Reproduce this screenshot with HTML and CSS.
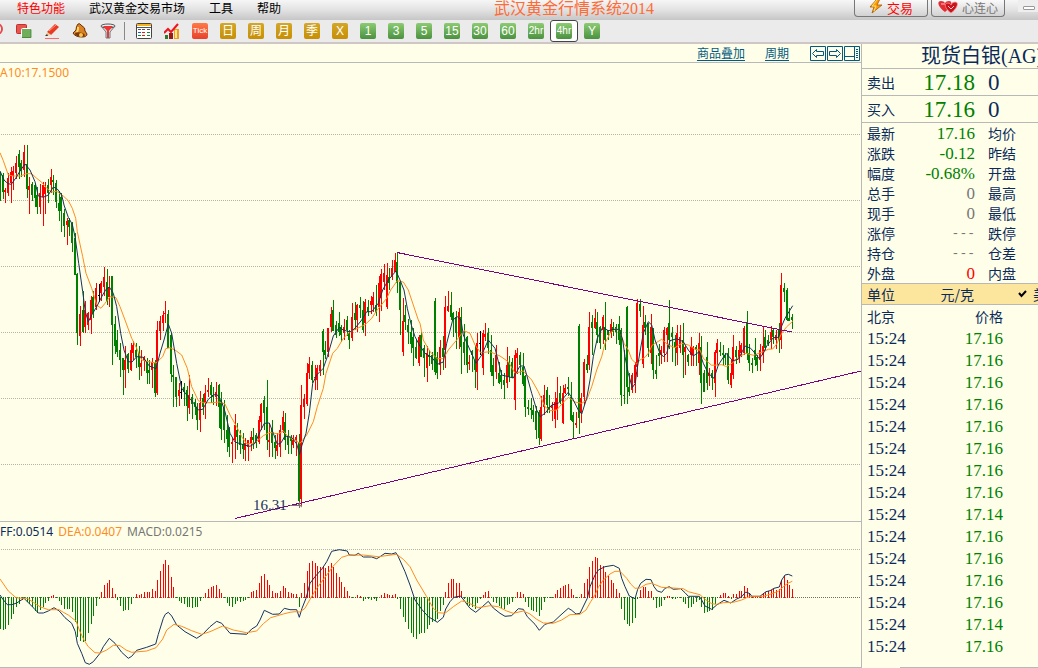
FILE: index.html
```html
<!DOCTYPE html>
<html lang="zh-CN">
<head>
<meta charset="utf-8">
<title>武汉黄金行情系统2014</title>
<link rel="stylesheet" href="styles.css">
</head>
<body>
<header class="menubar">
  <nav class="menus">
    <button class="menu hot">特色功能</button>
    <button class="menu">武汉黄金交易市场</button>
    <button class="menu">工具</button>
    <button class="menu">帮助</button>
  </nav>
  <h1 class="apptitle">武汉黄金行情系统2014</h1>
  <div class="actions">
    <button class="action trade"><svg width="14" height="16" viewBox="0 0 14 16"><path d="M8 0L1 8h4L3 14 13 6H8l3-6z" fill="#f90" stroke="#a35a10" stroke-width=".8"/><path d="M8 1L3 7h4l-2 5" fill="none" stroke="#ffe36b"/></svg>交易</button>
    <button class="action"><svg width="20" height="14" viewBox="0 0 20 14"><path d="M7 12C-1 6-1 1 3 1q3 0 4 2 1-2 4-2c4 0 3 5-4 11z" fill="#e32d35"/><path d="M13 13C6 8 6 3 10 3q2 0 3 2 1-3 4-3c4 0 3 6-4 11z" fill="#c8141e" stroke="#ff8a8a" stroke-width=".8"/><path d="M3 4h4m3 2l3 3 3-3" stroke="#ffc4c4" fill="none"/></svg>心连心</button>
    <button class="minimize" aria-label="最小化"><span class="minmark"></span></button>
  </div>
</header>

<div class="toolbar" role="toolbar">
  <button class="tool first" aria-label="放大"><svg width="16" height="16" viewBox="0 0 16 16"><circle cx="9" cy="6" r="5" fill="#fff" stroke="#e8474a" stroke-width="2"/><path d="M6 10l-4 5" stroke="#c33" stroke-width="2"/></svg></button>
  <button class="tool" aria-label="窗口"><svg width="16" height="16" viewBox="0 0 16 16"><rect x=".5" y="1.500" width="10" height="9" rx="1" fill="#e8554f" stroke="#c22f2f"/><rect x="5.500" y="5.500" width="10" height="9" rx="1" fill="#6fae5c" stroke="#fff"/><path d="M6 14.500h9v-8" fill="none" stroke="#4c8a40"/></svg></button>
  <button class="tool" aria-label="画线"><svg width="16" height="16" viewBox="0 0 16 16"><path d="M3 9L11 1l4 3-8 8z" fill="#ea3a20"/><path d="M5 8l7-6" stroke="#ff9a80"/><path d="M3 9l4 3-5 1z" fill="#f2c58c"/><path d="M1 13l2-2 1 2z" fill="#333"/><path d="M1 15.500h14" stroke="#f66" /></svg></button>
  <button class="tool" aria-label="预警"><svg width="16" height="16" viewBox="0 0 16 16"><path d="M6 1q2-1 3 1 5 3 4 6l2 3q0 3-5 3Q3 14 1 10l3-3Q4 3 6 1z" fill="#d98225" stroke="#6e3009"/><path d="M6 4q0 5-2 6" stroke="#ffd66a" stroke-width="2" fill="none"/><ellipse cx="8" cy="11.500" rx="5" ry="2" transform="rotate(12 8 11)" fill="#7a3a0c"/><circle cx="9" cy="12" r="2" fill="#ffc545"/></svg></button>
  <button class="tool" aria-label="筛选"><svg width="16" height="16" viewBox="0 0 16 16"><path d="M1 3l5 6v6h4V9l5-6z" fill="#ddd" stroke="#777"/><ellipse cx="8" cy="3" rx="7" ry="2" fill="#eee" stroke="#555"/><path d="M3 3h10L8 9z" fill="#e33"/><path d="M8 8v7" stroke="#c44" stroke-width="2"/></svg></button>
  <span class="divider"></span>
  <button class="tool" aria-label="报价"><svg width="16" height="16" viewBox="0 0 16 16"><rect x=".5" y=".5" width="15" height="15" rx="1" fill="#fff" stroke="#444"/><path d="M1 2h14" stroke="#f5b21b" stroke-width="2"/><path d="M1 4.500h14" stroke="#555"/><path d="M2 6.500h3m1 0h3m2 0h3" stroke="#555"/><path d="M2 9.500h3" stroke="#1a57c8"/><path d="M6 9.500h3m-3 3h3" stroke="#d21" /><path d="M11 9.500h3m-3 3h3m-12 0h3" stroke="#183"/></svg></button>
  <button class="tool" aria-label="走势"><svg width="16" height="16" viewBox="0 0 16 16"><path d="M1 12h3v4H1z" fill="#2d7a2d"/><path d="M5 10h4v6H5z" fill="#9a1c10"/><path d="M10 6h5v10h-5z" fill="#f0a018"/><path d="M11 7h2v8h-2z" fill="#ffe69a"/><path d="M0 10l4-4 3 3 7-8" fill="none" stroke="#f0141e" stroke-width="2"/></svg></button>
  <button class="tool"><span class="badge tick">Tick</span></button>
  <button class="tool"><span class="badge gold">日</span></button>
  <button class="tool"><span class="badge gold">周</span></button>
  <button class="tool"><span class="badge gold">月</span></button>
  <button class="tool"><span class="badge gold">季</span></button>
  <button class="tool"><span class="badge gold">X</span></button>
  <button class="tool"><span class="badge">1</span></button>
  <button class="tool"><span class="badge">3</span></button>
  <button class="tool"><span class="badge">5</span></button>
  <button class="tool"><span class="badge">15</span></button>
  <button class="tool"><span class="badge">30</span></button>
  <button class="tool"><span class="badge">60</span></button>
  <button class="tool"><span class="badge small">2hr</span></button>
  <button class="tool active" aria-pressed="true"><span class="badge small">4hr</span></button>
  <button class="tool"><span class="badge">Y</span></button>
</div>

<main class="workspace">
  <section class="charts">
    <div class="chartbar">
      <a class="link" href="#overlay">商品叠加</a>
      <a class="link" href="#period">周期</a>
      <div class="panes">
        <button class="pane" aria-label="上一个"><svg width="16" height="15" viewBox="0 0 16 15"><path d="M.5.5h15v14H.5z"/><path d="M2.500 7.500l4-4v2h7v4h-7v2z"/></svg></button>
        <button class="pane" aria-label="下一个"><svg width="16" height="15" viewBox="0 0 16 15"><path d="M.5.5h15v14H.5z"/><path d="M13.500 7.500l-4-4v2h-7v4h7v2z"/></svg></button>
        <button class="pane" aria-label="布局"><svg width="16" height="15" viewBox="0 0 16 15"><path d="M.5.5h15v14H.5zM10.500 1v13M1 10.500h9M12 3.500h2m-2 2h2m-2 2h2m-2 2h2m-2 2h2"/></svg></button>
      </div>
    </div>
    <div class="legend"><span class="slow">A10:17.1500</span></div>
    <svg class="plot" id="price" viewBox="0 83 861 438" role="img" aria-label="K线图"></svg>
    <div class="legend second"><span class="fast">FF:0.0514</span><span class="slow">DEA:0.0407</span><span class="muted">MACD:0.0215</span></div>
    <svg class="plot" id="macd" viewBox="0 542 861 125" role="img" aria-label="MACD"></svg>
  </section>

  <aside class="quote">
    <h2 class="symbol">现货白银(AG)</h2>
    <table class="book">
      <tr><th>卖出</th><td class="down">17.18</td><td class="qty">0</td></tr>
      <tr><th>买入</th><td class="down">17.16</td><td class="qty">0</td></tr>
    </table>
    <table class="stats">
      <tr><th>最新</th><td class="down">17.16</td><th class="right">均价</th></tr>
      <tr><th>涨跌</th><td class="down">-0.12</td><th class="right">昨结</th></tr>
      <tr><th>幅度</th><td class="down">-0.68%</td><th class="right">开盘</th></tr>
      <tr><th>总手</th><td class="muted">0</td><th class="right">最高</th></tr>
      <tr><th>现手</th><td class="muted">0</td><th class="right">最低</th></tr>
      <tr><th>涨停</th><td class="muted none">---</td><th class="right">跌停</th></tr>
      <tr><th>持仓</th><td class="muted none">---</td><th class="right">仓差</th></tr>
      <tr><th>外盘</th><td class="up">0</td><th class="right">内盘</th></tr>
    </table>
    <div class="unit"><span>单位</span><span class="unitname">元/克</span><svg class="check" width="9" height="8" viewBox="0 0 9 8"><path d="M1 3l2.500 3L8 1" fill="none" stroke="#000" stroke-width="2"/></svg><span>美</span></div>
    <table class="ticks">
      <thead><tr><th>北京</th><th class="pricehead">价格</th></tr></thead>
      <tbody>
        <tr><td>15:24</td><td class="down">17.16</td></tr>
        <tr><td>15:24</td><td class="down">17.16</td></tr>
        <tr><td>15:24</td><td class="down">17.16</td></tr>
        <tr><td>15:24</td><td class="down">17.16</td></tr>
        <tr><td>15:24</td><td class="down">17.16</td></tr>
        <tr><td>15:24</td><td class="down">17.16</td></tr>
        <tr><td>15:24</td><td class="down">17.16</td></tr>
        <tr><td>15:24</td><td class="down">17.16</td></tr>
        <tr><td>15:24</td><td class="down">17.14</td></tr>
        <tr><td>15:24</td><td class="down">17.16</td></tr>
        <tr><td>15:24</td><td class="down">17.16</td></tr>
        <tr><td>15:24</td><td class="down">17.16</td></tr>
        <tr><td>15:24</td><td class="down">17.16</td></tr>
        <tr><td>15:24</td><td class="down">17.14</td></tr>
        <tr><td>15:24</td><td class="down">17.16</td></tr>
      </tbody>
    </table>
    <div class="foot"></div>
  </aside>
</main>
<script src="chart.js"></script>
</body>
</html>
```

FILE: styles.css
```css
* { box-sizing: border-box; }
:root {
  --paper: #ffffe9;
  --line: #b8b8b8;
  --navy: #0a2a5c;
  --orange: #ff8c1e;
  --green: #008000;
  --cjk: "Noto Sans CJK SC", sans-serif;
  --digits: "Liberation Serif", "Noto Sans CJK SC", serif;
}
body {
  margin: 0;
  min-height: 100vh;
  display: flex;
  flex-direction: column;
  overflow: hidden;
  background: var(--paper);
  color: var(--navy);
  font: 12px/16px var(--cjk);
}
button { margin: 0; padding: 0; border: 0; background: none; font: inherit; color: inherit; }
svg { display: block; flex: none; }

.menubar {
  display: grid;
  grid-template-columns: 494px 1fr auto;
  align-items: start;
  height: 20px;
  background: linear-gradient(#f6f6f6, #e2e2e2 50%, #c6c6c6);
  color: #000;
}
.menus { display: flex; gap: 24px; padding-left: 17px; }
.menu { line-height: 16px; white-space: nowrap; }
.menu.hot { color: #f00; }
.apptitle { margin: 0; font: 16px/18px var(--digits); color: #ff6b35; white-space: nowrap; }
.actions { display: flex; gap: 3px; }
.action {
  display: flex;
  align-items: center;
  justify-content: center;
  gap: 4px;
  width: 74px;
  height: 17px;
  border: 1px solid #777;
  border-top: 0;
  border-radius: 0 0 4px 4px;
  background: linear-gradient(#fafafa, #d2d2d2);
  color: #777;
  line-height: 14px;
  overflow: hidden;
}
.action.trade { color: #f00; font-size: 13px; }
.action svg { margin-bottom: 2px; }
.minimize { width: 20px; height: 12px; margin-left: 10px; padding: 3px 0 0 5px; background: #eee; }
.minmark { display: block; width: 12px; height: 4px; border: 1px solid #999; border-radius: 1px; background: #fff; }

.toolbar {
  display: flex;
  height: 24px;
  border-bottom: 2px solid #cfc6c6;
  background: #ebebeb;
}
.tool { display: flex; flex: none; align-items: center; justify-content: center; width: 28px; height: 22px; }
.tool.first { width: 10px; justify-content: flex-end; padding-right: 6px; overflow: hidden; }
.tool.active { border: 1px solid #444; border-radius: 3px; background: #fff; }
.divider { flex: none; width: 8px; height: 18px; margin-top: 2px; background: linear-gradient(#888, #888) 2px 0 / 1px 100% no-repeat; }
.badge {
  display: block;
  width: 16px;
  height: 16px;
  border-radius: 2px;
  background: linear-gradient(#8ccb72, #4b9140);
  color: #fff;
  font: 12px/16px "Liberation Sans", var(--cjk);
  text-align: center;
}
.badge.gold { background: linear-gradient(#d3a727, #c78f05); }
.badge.tick { background: linear-gradient(#ff7a45, #e8402c); font-size: 8px; }
.badge.small { font-size: 10px; }

.workspace { display: grid; grid-template-columns: minmax(0, 1fr) 177px; flex: 1; }
.charts { border-bottom: 1px solid var(--line); }
.chartbar {
  display: flex;
  align-items: center;
  justify-content: flex-end;
  height: 19px;
  padding-right: 1px;
  border-bottom: 1px solid var(--line);
}
.link { margin-right: 20px; color: #005a82; text-decoration: underline; text-underline-offset: 2px; }
.panes { display: flex; gap: 1px; margin-left: 1px; }
.pane path { fill: none; stroke: #005a82; }
.legend { display: flex; gap: 5px; height: 20px; font: 12px/19px "Noto Sans", sans-serif; }
.legend.second { height: 21px; border-top: 1px solid var(--line); line-height: 20px; }
.plot { width: 100%; height: auto; }
.fast { color: var(--navy); }
.slow { color: var(--orange); }

.quote { display: flex; flex-direction: column; border-left: 1px solid var(--line); overflow: hidden; }
.symbol { margin: 0; padding-left: 59px; height: 25px; border-bottom: 1px solid var(--line); font: 20px/24px var(--digits); white-space: nowrap; }
table { width: 100%; table-layout: fixed; border-collapse: separate; border-spacing: 0; }
th { padding: 0 0 0 5px; font-weight: 400; font-size: 14px; line-height: 18px; text-align: left; }
td { padding: 0; font-family: var(--digits); font-size: 17px; }
.down { color: var(--green); }
.up { color: #f00; }
.muted { color: #777; }
.book th, .book td { height: 27px; border-bottom: 1px solid var(--line); }
.book th, .stats th:first-child { width: 43px; }
.book td { width: 70px; padding-top: 2px; font-size: 23px; line-height: 24px; text-align: right; }
.book .qty { width: auto; padding-left: 13px; text-align: left; }
.stats th, .stats td { height: 20px; }
.stats td { width: 70px; padding-top: 2px; line-height: 18px; text-align: right; }
.stats .none { font-family: "Liberation Mono", monospace; font-size: 13px; }
.stats .right { padding-left: 13px; }
.unit {
  display: flex;
  flex: none;
  align-items: center;
  height: 22px;
  padding-left: 5px;
  border: solid var(--line);
  border-width: 1px 0;
  background: #fce69e;
  font-size: 14px;
  white-space: nowrap;
}
.unit span { flex: none; }
.unit .unitname { flex: none; width: 79px; text-align: right; }
.check { margin: 0 6px 0 44px; }
.ticks th, .ticks td { width: 80px; height: 22px; line-height: 20px; }
.ticks td { padding: 2px 0 0 5px; }
.ticks .down { padding: 2px 35px 0 0; width: auto; text-align: right; }
.ticks .pricehead { padding: 0 35px 0 0; width: auto; text-align: right; }
.foot { margin: auto 0 0 38px; border-bottom: 1px solid var(--line); }
```

FILE: chart.js
```js
// Each block: origin x, origin y, then rows of "colour x high low bodyTop bodyBottom" in thirds of a unit.
const candles = [
[0, 130, `g 1 125 212 125 212,g 9 128 207 135 186,r 16 174 218 180 186,r 25 130 197 145 190,r 34 112 218 125 160,r 40 108 180 122 137,r 48 78 146 98 128,g 58 60 147 72 110,g 64 90 140 98 122,r 72 45 142 66 120,g 82 45 205 102 178,r 88 141 252 168 180,g 97 156 213 163 195,g 105 160 232 165 205,g 111 170 252 195 230,r 121 162 252 190 232,r 130 156 287 165 200,r 136 156 252 170 192,g 145 147 218 166 190,r 154 117 188 142 166,g 160 135 195 150 155,g 169 150 235 160 216,g 177 183 273 218 242,g 184 190 306 200 243,g 193 236 320 250 288,r 202 264 345 272 285,g 208 264 318 270 290,g 217 275 366 280 339,g 225 310 435 325 435,g 232 430 645 432 608,r 241 528 648 552 618,g 250 483 610 540 605,r 256 513 609 540 592,r 265 545 600 550 585,r 274 498 612 510 570,g 280 483 564 500 548,r 289 459 540 475 530,k 298 462 516 495 498,r 304 453 513 460 490,r 313 411 498 440 470,g 322 417 525 456 512,r 328 438 531 470 500,g 337 438 705 438 585,g 346 558 672 582 648,g 352 600 681 630 665,g 361 639 741 660 690,g 370 684 795 685 720,r 376 648 774 690 720,g 385 669 729 672 718,r 393 640 723 660 720,r 400 633 690 645 670,g 409 640 714 660 680,g 417 648 750 670 712,r 424 660 738 700 710,r 433 678 723 682 690,g 442 684 762 695 728,g 448 690 762 720 730,r 457 684 774 695 720,g 466 690 801 700 788,r 472 573 795 600 790,r 481 558 630 572 603,r 490 543 603 555 580,r 496 513 580 548 551,g 505 540 655 552 655,g 514 610 756 615 733,g 520 705 831 735 742,g 529 741 831 742 800,r 538 760 828 780 797,k 544 752 806 785 788,g 553 760 828 772 785,g 562 768 873 780 828,r 568 735 853 795 835,g 577 792 867 800 822,g 586 807 855 815 830,g 592 819 900 830 870,r 601 783 906 820 870,g 610 792 855 805 830,r 616 765 867 790 820,r 625 744 800 780 785,g 634 756 820 765 795,g 640 770 825 795 800,r 649 756 828 785 800,g 658 762 894 765 830`],
[200, 240, `g 64 457 600 480 567,g 73 480 610 500 570,g 82 525 635 570 598,g 88 560 650 565 620,r 97 594 669 605 612,r 106 522 657 555 600,g 112 549 630 570 590,g 121 570 642 585 615,g 130 580 657 612 628,r 136 594 663 610 630,r 145 600 663 600 622,r 154 573 633 590 612,g 160 564 627 590 600,g 169 579 624 585 610,r 178 528 612 540 605,r 184 489 570 492 545,g 193 468 570 480 520,g 202 420 630 500 600,r 208 549 651 600 605,g 217 540 651 565 610,g 226 585 657 605 625,r 232 580 648 615 632,r 241 555 651 570 620,r 250 513 580 530 570,g 256 519 630 545 600,g 265 570 642 590 615,g 274 585 642 590 602,r 280 585 624 600 615,r 289 585 648 592 600,g 298 582 789 605 783,r 304 435 798 495 777,r 313 462 537 477 500,r 322 370 498 400 492,r 328 351 417 372 400,g 337 363 430 375 420,r 346 375 450 410 415,r 352 375 450 385 420,r 361 360 408 375 393,g 370 267 405 273 335,g 376 303 357 330 345,r 385 264 352 265 335,r 394 201 275 222 262,g 400 180 273 210 272,g 409 243 294 255 285,g 418 216 288 250 275,g 424 255 306 262 285,r 433 237 300 260 280,g 442 228 288 240 270,g 448 270 327 280 300,r 457 189 303 230 295,g 466 185 270 220 240,r 472 192 276 195 240,g 481 171 234 195 205,g 490 183 279 210 270,r 496 177 288 185 250,g 505 180 228 200 215,r 514 168 222 183 195,r 520 156 216 170 195,g 529 135 228 195 215,r 538 108 246 130 200,r 544 87 213 102 175,r 553 72 150 100 125,r 562 69 207 105 202,g 568 84 150 110 130,r 577 60 120 85 110,r 586 39 96 60 95,g 592 36 159 65 130,g 601 125 285 125 210,r 610 174 348 243 336,g 616 195 270 225 245,g 625 237 312 255 275,g 634 240 339 275 312,g 640 264 378 290 325,g 649 297 357 320 355,r 658 285 378 290 370`],
[400, 240, `g 64 276 350 285 350,g 73 315 411 325 355,r 82 318 426 340 385,g 89 330 378 345 352,g 97 336 390 345 372,g 106 174 405 183 396,g 112 336 417 350 400,r 121 300 405 320 375,g 130 288 390 325 350,r 136 168 384 200 330,r 145 153 216 198 212,g 154 156 240 195 230,g 160 216 291 220 240,g 169 213 327 230 280,r 178 204 327 215 290,g 184 201 402 230 320,g 193 252 375 305 340,g 202 288 399 290 375,r 208 344 390 365 372,g 217 330 396 333 345,g 226 315 444 360 390,r 232 279 450 310 395,k 241 273 345 309 312,r 250 270 405 280 385,r 256 249 303 282 290,g 265 264 342 280 325,g 274 285 408 330 396,g 280 354 438 375 408,r 289 315 417 345 395,g 298 366 432 400 428,g 304 390 447 405 425,g 313 400 477 420 435,r 322 321 444 375 430,g 329 348 426 365 410,g 337 354 414 365 412,r 346 330 510 345 480,r 352 324 402 340 355,g 361 336 405 345 375,g 370 339 438 380 432,g 376 405 531 408 500,g 385 480 525 500 507,g 394 474 537 505 510,g 400 495 546 510 525,g 409 498 597 512 570,g 418 510 615 515 595,r 424 468 603 500 597,r 433 435 525 465 500,g 442 441 520 450 495,g 448 465 520 500 510,r 457 486 543 495 505,r 466 456 564 487 538,r 472 411 540 475 510,g 481 438 492 458 485,r 490 435 552 458 550,r 496 432 462 445 458,g 505 411 468 440 448,g 514 426 543 470 540,g 520 516 597 525 545,r 529 516 564 550 555,g 538 252 582 258 535,r 544 459 549 475 520,r 553 357 495 365 470,g 561 345 400 372 390,r 568 216 390 262 375,g 577 225 345 245 265,r 586 207 267 235 265,g 592 216 310 245 285,g 601 258 327 260 310,r 610 225 312 230 270,g 616 186 330 260 300,g 625 270 300 270 285,r 634 237 294 252 280,g 640 246 288 260 275,g 649 252 312 262 275,g 658 228 315 252 300,g 664 264 498 270 465,g 673 330 492 465 468,g 682 198 492 200 440,g 688 400 468 440 455,r 697 399 460 405 450,r 706 366 459 375 430,r 712 177 410 190 380`],
[620, 240, `g 61 177 231 192 212,r 70 198 384 255 372,g 76 225 285 245 265,g 85 248 350 250 325,r 94 222 372 262 340,g 100 265 417 268 390,g 109 345 417 390 402,g 118 312 378 340 348,r 124 318 372 330 345,r 133 262 366 270 340,r 142 261 366 265 285,g 148 180 327 250 300,g 157 261 366 280 290,g 166 285 378 305 320,r 172 255 375 280 340,r 181 255 340 290 325,g 190 249 414 300 345,r 196 318 405 320 335,g 205 342 378 345 365,r 214 290 378 320 345,r 220 318 378 320 345,g 229 315 378 320 330,r 238 279 405 310 370,g 244 288 492 320 430,g 253 390 456 400 455,g 262 306 450 350 430,r 268 384 438 400 408,g 277 390 450 400 415,r 286 330 471 335 430,r 292 297 375 310 340,g 301 306 348 330 335,g 310 315 375 340 345,g 316 339 375 345 355,g 325 324 432 340 420,r 334 360 444 400 435,r 340 285 417 320 405,g 349 318 372 330 350,r 358 303 369 330 355,r 364 309 350 315 340,r 373 258 345 265 340,g 382 213 360 250 340,g 388 312 393 340 370,g 397 354 399 370 375,g 406 294 378 330 360,g 412 345 393 350 375,r 421 312 393 330 360,r 430 261 369 318 345,g 436 270 333 290 325,g 445 285 318 300 312,r 454 258 327 275 300,g 460 267 312 270 290,r 469 270 327 285 300,g 478 249 339 270 300,r 484 99 327 135 300,g 493 129 186 145 155,g 502 144 243 150 240,g 508 204 243 235 243,g 517 222 267 232 240`]
];

const maFast = [
[0, 130, "0,123 12,150 24,161 34,163 48,143 60,123 75,102 90,120 105,155 115,198 130,202 145,195 160,171 172,177 185,195 192,225 205,262 217,283 226,325 236,400 248,485 256,545 265,575 275,555 290,530 305,500 318,478 328,471 340,490 350,530 362,610 372,660 385,695 396,696 410,680 430,682 448,708 468,716 480,670 492,630 505,582 515,610 530,700 545,775 560,795 580,818 595,840 608,838 625,808 640,795 650,793"],
[200, 240, "62,478 75,515 90,580 105,606 130,614 150,619 165,610 180,575 193,550 208,549 220,580 232,613 242,610 255,588 275,592 290,612 299,643 305,618 318,580 328,520 338,430 350,405 370,385 382,350 400,288 418,262 430,270 450,276 465,265 485,240 500,215 515,215 535,190 548,150 565,120 588,93 600,120 612,150 622,205 634,255 645,290 660,318"],
[400, 240, "75,340 95,352 112,373 130,366 140,310 158,240 172,230 183,240 190,285 210,330 228,370 245,345 265,300 285,325 305,405 325,410 340,414 350,395 360,378 372,378 380,405 395,460 410,510 420,530 435,520 455,495 475,490 490,475 505,457 520,480 535,510 545,522 560,475 570,420 580,350 592,295 608,262 625,272 642,268 658,268 668,300 675,350 685,400 697,443 706,430"],
[620, 240, "50,395 60,335 70,280 85,245 95,255 105,300 118,335 130,350 140,340 150,302 170,296 190,305 205,330 220,348 238,335 250,370 265,400 282,415 295,375 318,340 338,362 355,358 375,318 392,325 405,340 418,356 430,340 440,318 460,293 475,292 485,258 495,235 507,215 518,197"]
];
const maSlow = [
[0, 130, "0,68 10,92 25,135 40,138 62,138 78,131 95,131 110,145 125,157 140,175 155,186 170,184 190,198 205,212 217,235 227,265 232,305 248,380 258,430 275,475 290,525 303,535 315,520 330,500 348,503 360,530 375,570 395,625 410,655 425,690 440,694 468,699 488,680 497,656 510,653 525,660 545,675 562,715 575,770 595,812 610,818 635,818"],
[200, 240, "58,486 75,492 90,525 110,560 125,590 140,612 160,610 175,600 190,587 210,577 235,582 250,573 265,590 285,600 300,610 320,585 340,545 352,500 370,445 378,400 398,340 412,325 430,295 450,275 470,266 495,254 515,235 530,212 560,175 572,150 592,122 610,126 625,150 640,195 655,240"],
[400, 240, "60,250 70,300 90,335 112,356 130,356 145,330 170,300 192,272 210,280 225,315 242,338 270,335 300,348 325,365 345,400 370,393 395,420 415,455 435,500 450,512 470,510 490,487 505,472 525,486 545,490 560,480 575,440 590,390 605,350 615,310 630,280 645,267 658,270 672,310 685,330 695,358 710,372"],
[620, 240, "60,360 75,352 85,340 97,315 125,298 145,315 165,323 185,310 205,315 225,328 240,330 250,355 275,376 305,374 320,380 338,368 360,348 378,340 400,346 430,335 445,328 458,327 470,312 485,280 500,260 518,244"]
];
const dif = [
[0, 515, "0,240 8,252 22,269 35,269 50,264 72,250 88,266 102,280 115,294 130,294 145,288 162,278 178,288 195,308 215,325 226,350 232,385 245,415 256,443 268,448 280,440 300,415 310,395 328,370 345,385 365,412 385,430 395,424 410,406 440,397 467,387 475,358 490,310 496,298 505,292 515,303 530,330 555,350 590,370 608,358 630,335 650,319 665,325 690,355 740,358 755,342 770,333 780,315 793,286 818,298 838,297 853,280"],
[290, 530, "0,239 20,239 28,262 36,235 48,205 60,160 75,140 95,118 110,95 125,64 148,59 172,63 178,75 195,76 205,70 220,81 245,81 260,86 270,80 285,70 305,72 318,68 325,80 345,125 360,165 375,210 395,238 415,260 435,272 442,277 460,262 467,237 480,215 492,202 512,198 525,215 540,235 557,247 575,232 595,214 610,234 630,250 645,259 665,257 685,236 700,238 712,260 735,283 748,301 765,283 790,276 810,257 835,235"],
[570, 530, "5,241 18,252 30,250 42,225 52,205 60,170 75,135 85,120 105,110 130,106 148,115 155,145 165,170 178,198 195,206 203,178 212,160 228,148 243,149 252,170 262,183 275,187 285,175 298,170 310,178 332,176 345,188 355,199 388,199 395,210 405,228 425,238 440,225 462,211 482,219 500,207 515,200 527,186 540,191 545,199 570,199 588,185 600,182 612,175 628,171 635,150 645,135 655,133 667,138"]
];
const dea = [
[0, 515, "0,192 25,228 48,248 65,250 82,250 100,262 120,275 145,284 178,284 190,292 205,300 215,308 228,318 240,350 252,375 265,395 285,413 300,414 320,405 340,391 360,392 378,405 395,412 440,408 468,398 488,372 500,345 522,328 545,334 575,347 605,358 630,350 668,333 700,345 740,353 770,348 790,326 812,308 850,297"],
[290, 530, "0,247 15,245 30,246 45,235 60,208 80,175 110,135 130,108 155,82 175,76 220,75 265,80 320,73 340,88 360,110 380,150 410,200 430,235 445,248 465,250 490,230 515,213 530,216 565,233 600,227 625,230 650,243 670,250 700,243 720,252 740,268 760,279 790,280 815,270"],
[570, 530, "0,254 30,253 48,240 62,215 75,195 85,172 100,150 120,132 135,124 150,124 170,145 182,162 195,175 210,174 228,163 245,160 275,172 340,176 355,185 390,194 405,208 425,221 440,223 460,218 490,217 515,210 530,203 545,199 580,199 600,193 625,184 640,170 655,159 667,154"]
];
// Histogram: origin x, origin y, then "x end" pairs in thirds of a unit.
const bars = [
[0, 515, "1 342,10 345,16 342,25 330,34 312,40 297,49 277,58 266,66 256,73 245,82 262,88 268,97 275,106 288,112 293,121 285,130 275,136 263,145 257,154 243,160 240,169 250,178 257,184 270,193 281,202 282,208 282,217 290,226 320,232 365,241 378,250 381,256 378,265 355,274 328,280 303,289 273,298 252,304 231,313 211,322 203,328 195,337 220,346 237,352 256,361 273,370 288,376 285,385 285,394 267,400 250,409 237,418 240,424 238,433 231,442 231,448 231,457 222,466 227,472 195,481 168,490 147,496 135,505 150,514 186,520 216,529 250,538 258,544 263,553 267,562 276,568 275,577 279,586 276,592 276,601 258,610 250,616 234,625 222,634 216,640 212,649 210,658 221,664 234,673 250,682 264,688 272,697 277,706 267,712 258,721 261,730 258,737 255,745 250,754 231,760 228,769 225,778 204,784 183,793 177,802 195,808 210,817 228,826 234,832 234,841 228,850 213,856 219,865 231,874 234,880 237,889 237,898 276"],
[290, 530, "34 189,43 159,52 123,58 99,67 93,76 99,82 108,91 110,100 111,106 114,115 108,124 99,130 111,139 129,148 141,154 156,163 171,172 183,178 198,187 205,196 205,202 195,211 198,220 212,226 207,235 206,244 209,252 206,260 213,274 195,283 189,292 192,298 195,307 196,316 192,322 206,331 237,340 261,346 276,355 297,364 309,370 320,379 327,388 312,394 309,403 309,412 297,418 285,427 276,436 272,442 267,451 243,460 225,466 186,475 159,484 147,490 147,499 159,508 159,514 183,523 206,532 225,538 228,547 231,556 237,562 219,571 206,580 195,586 186,595 183,604 205,610 216,619 219,628 228,634 234,643 237,652 225,658 222,667 216,675 205,682 186,691 186,700 192,706 216,715 231,724 240,730 242,739 246,748 258,754 240,763 216,772 205,780 205,787 205,796 192,802 180,811 174,820 168,826 165,835 162"],
[570, 530, "4 177,10 195,19 205,28 205,34 192,43 159,52 147,58 111,67 93,76 81,82 84,91 105,100 108,106 126,115 138,124 150,130 159,139 177,148 189,154 237,163 270,172 282,178 288,187 279,196 264,202 206,211 180,220 171,226 171,235 183,244 183,250 210,259 234,268 231,274 228,283 210,292 199,298 198,307 207,316 207,322 205,331 205,340 216,346 222,355 234,364 231,370 222,379 216,388 210,394 231,403 249,412 246,418 243,427 240,436 222,442 205,451 195,460 189,466 189,475 199,484 207,490 192,499 192,508 183,514 183,523 168,532 174,538 189,547 199,556 199,562 199,571 199,580 189,586 186,595 183,604 180,610 177,619 180,628 177,634 150,643 138,652 150,658 165,667 177"]
];

const palette = { r: "#ff0000", g: "#008000", k: "#000000" };
const navy = "#15335c";
const orange = "#ff8c1e";
const zeroY = 597;

function add(svg, name, attrs, text) {
  const el = document.createElementNS("http://www.w3.org/2000/svg", name);
  for (const key in attrs) el.setAttribute(key, attrs[key]);
  if (text) el.textContent = text;
  svg.appendChild(el);
}
function dotted(svg, y, color, from) {
  add(svg, "path", { d: `M${from} ${y + 0.5}H861`, stroke: color, "stroke-dasharray": "1 1", "shape-rendering": "crispEdges" });
}
function curve(svg, blocks, color) {
  const points = blocks.flatMap(([ox, oy, text]) => text.split(" ").map(pair => {
    const [x, y] = pair.split(",").map(Number);
    return `${(ox + x / 3).toFixed(1)},${(oy + y / 3).toFixed(1)}`;
  }));
  add(svg, "polyline", { points: points.join(" "), fill: "none", stroke: color, "stroke-width": 1 });
}
const box = (x, y, w, h) => `M${x} ${y}h${w}v${h}h-${w}z`;

const price = document.getElementById("price");
[134, 200, 266, 332, 398, 464].forEach(y => dotted(price, y, "#b4b4a8", 1));
const shapes = { r: "", g: "", k: "" };
candles.forEach(([ox, oy, text]) => text.split(",").forEach(row => {
  const [color, ...n] = row.split(" ");
  const [x, high, low, top, bottom] = n.map(Number);
  const px = ox + Math.floor(x / 3);
  const py = v => oy + Math.round(v / 3);
  shapes[color] += box(px, py(high), 1, Math.max(1, py(low) - py(high)));
  shapes[color] += box(px - 1, py(top), 2, Math.max(1, py(bottom) - py(top)));
}));
for (const c in shapes) add(price, "path", { d: shapes[c], fill: palette[c], "shape-rendering": "crispEdges" });
curve(price, maSlow, orange);
curve(price, maFast, navy);
add(price, "path", { d: "M397 252.5L792 332M235 518.5L861 371", stroke: "#800080", fill: "none", "shape-rendering": "crispEdges" });
add(price, "path", { d: "M290 505.500h12M299.500 502v6M298 504l4 3", stroke: "#777", fill: "none" });
add(price, "text", { x: 253, y: 510, fill: navy, "font-family": "Liberation Serif, serif", "font-size": 15 }, "16.31");

const macd = document.getElementById("macd");
dotted(macd, 549, "#b4b4a8", 1);
dotted(macd, zeroY, "#70705c", 1);
const columns = { r: "", g: "" };
bars.forEach(([ox, oy, text]) => text.split(",").forEach(row => {
  const [x, end] = row.split(" ").map(Number);
  const px = ox + Math.floor(x / 3);
  const y = oy + Math.round(end / 3);
  if (y < zeroY) columns.r += box(px, y, 1, zeroY + 1 - y);
  else columns.g += box(px, zeroY, 1, Math.max(1, y - zeroY));
}));
for (const c in columns) add(macd, "path", { d: columns[c], fill: palette[c], "shape-rendering": "crispEdges" });
curve(macd, dif, navy);
curve(macd, dea, orange);
```
